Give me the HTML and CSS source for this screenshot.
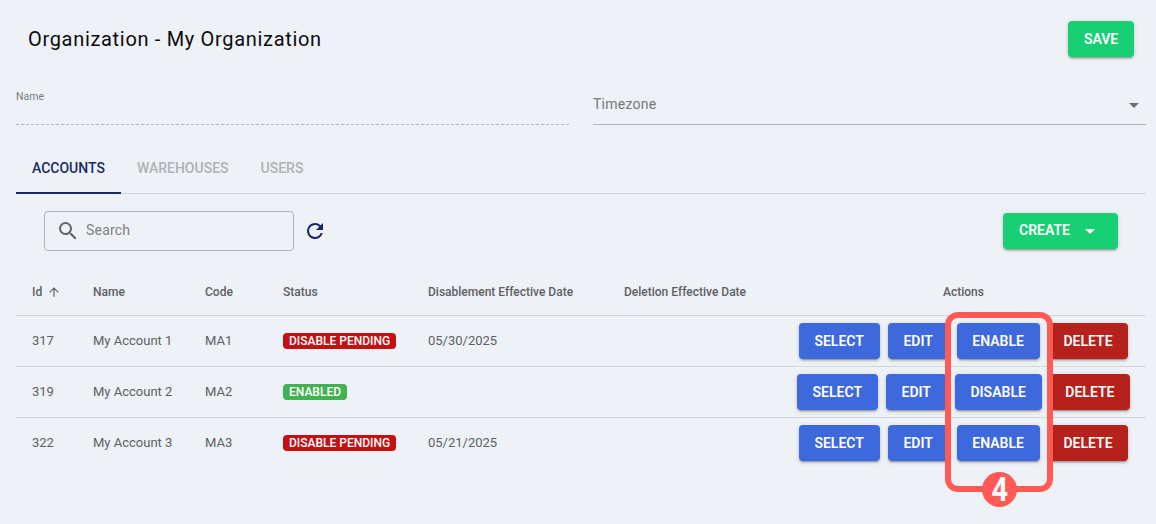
FILE: index.html
```html
<!DOCTYPE html>
<html lang="en">
<head>
<meta charset="utf-8">
<title>Organization - My Organization</title>
<link rel="stylesheet" href="styles.css">
</head>
<body>
<main class="page">
  <header class="header">
    <h1 class="title">Organization - My Organization</h1>
    <button class="btn btn-green">SAVE</button>
  </header>
  <section class="form-row">
    <div class="field field-name"><span class="field-label">Name</span></div>
    <div class="field field-zone">
      <span class="field-value">Timezone</span>
      <span class="select-arrow"></span>
    </div>
  </section>
  <nav class="tabs">
    <a class="tab tab-active">ACCOUNTS</a>
    <a class="tab">WAREHOUSES</a>
    <a class="tab">USERS</a>
  </nav>
  <section class="toolbar">
    <div class="search">
      <svg class="search-icon" viewBox="0 0 24 24" width="24" height="24"><path fill="#5f6368" d="M15.5 14h-.79l-.28-.27A6.47 6.47 0 0 0 16 9.5 6.5 6.5 0 1 0 9.5 16c1.61 0 3.09-.59 4.23-1.57l.27.28v.79l5 4.99L20.49 19l-4.99-5zm-6 0C7.01 14 5 11.99 5 9.5S7.01 5 9.5 5 14 7.01 14 9.5 11.99 14 9.5 14z"/></svg>
      <span class="search-text">Search</span>
    </div>
    <svg class="refresh" viewBox="0 0 24 24" width="24" height="24"><path fill="#152a66" d="M17.65 6.35A7.95 7.95 0 0 0 12 4a8 8 0 1 0 7.73 10h-2.08A6 6 0 1 1 12 6c1.66 0 3.14.69 4.22 1.78L13 11h7V4l-2.35 2.35z"/></svg>
    <button class="btn btn-green btn-create"><span class="create-label">CREATE</span><span class="create-arrow"></span></button>
  </section>
  <table class="grid">
    <colgroup>
      <col class="c-id"><col class="c-name"><col class="c-code"><col class="c-status"><col class="c-dis"><col class="c-del"><col class="c-act">
    </colgroup>
    <thead>
      <tr>
        <th>Id <svg class="sort" viewBox="0 0 24 24" width="14" height="14"><path fill="#5a5f66" d="M4 12l1.41 1.41L11 7.83V20h2V7.83l5.58 5.59L20 12l-8-8-8 8z"/></svg></th>
        <th>Name</th><th>Code</th><th>Status</th><th>Disablement Effective Date</th><th>Deletion Effective Date</th><th class="th-act">Actions</th>
      </tr>
    </thead>
    <tbody>
      <tr>
        <td>317</td><td>My Account 1</td><td>MA1</td><td><span class="chip chip-red">DISABLE PENDING</span></td><td>05/30/2025</td><td></td>
        <td><div class="actions"><button class="btn btn-blue">SELECT</button><button class="btn btn-blue">EDIT</button><button class="btn btn-blue">ENABLE</button><button class="btn btn-red">DELETE</button></div></td>
      </tr>
      <tr>
        <td>319</td><td>My Account 2</td><td>MA2</td><td><span class="chip chip-green">ENABLED</span></td><td></td><td></td>
        <td><div class="actions"><button class="btn btn-blue">SELECT</button><button class="btn btn-blue">EDIT</button><button class="btn btn-blue">DISABLE</button><button class="btn btn-red">DELETE</button></div></td>
      </tr>
      <tr>
        <td>322</td><td>My Account 3</td><td>MA3</td><td><span class="chip chip-red">DISABLE PENDING</span></td><td>05/21/2025</td><td></td>
        <td><div class="actions"><button class="btn btn-blue">SELECT</button><button class="btn btn-blue">EDIT</button><button class="btn btn-blue">ENABLE</button><button class="btn btn-red">DELETE</button></div></td>
      </tr>
    </tbody>
  </table>
</main>
<div class="callout"></div>
<div class="callout-badge"><span class="callout-digit">4</span></div>
</body>
</html>
```
FILE: styles.css
```css
* { box-sizing: border-box; }
html, body { margin: 0; height: 100%; }
body {
  background: #eef1f6;
  font-family: Roboto, "Liberation Sans", sans-serif;
  color: #000;
  overflow: hidden;
  position: relative;
}
.page { padding: 0 10px 0 16px; }

.header {
  display: flex;
  justify-content: space-between;
  align-items: center;
  padding: 21px 12px 0 12px;
}
.title { margin: 0; font-size: 20px; font-weight: 400; line-height: 36px; letter-spacing: 0.68px; color: #0b0b0f; }

.btn {
  border: 0;
  border-radius: 4px;
  height: 36px;
  padding: 0 15.75px;
  font-family: inherit;
  font-size: 14px;
  font-weight: 600;
  line-height: 34px;
  color: #fff;
  box-shadow: 0 3px 1px -2px rgba(0,0,0,.2), 0 2px 2px 0 rgba(0,0,0,.14), 0 1px 5px 0 rgba(0,0,0,.12);
}
.btn-green { background: #18cf73; }
.btn-blue { background: #3d69dc; }
.btn-red { background: #b7211b; }

.form-row {
  display: flex;
  gap: 24px;
  margin-top: 31px;
  height: 37px;
}
.field { flex: none; width: 553px; position: relative; }
.field-name { border-bottom: 1px dashed #b4b7bb; }
.field-zone { border-bottom: 1px solid #b0b3b7; display: flex; justify-content: space-between; align-items: center; padding: 0 7px 4px 0; }
.field-label { display: block; font-size: 10.5px; line-height: 12px; color: #7a7d82; margin-top: 3px; }
.field-value { font-size: 14px; letter-spacing: 0.25px; color: #75787d; }
.select-arrow { width: 0; height: 0; border-left: 5px solid transparent; border-right: 5px solid transparent; border-top: 5px solid #6a6d72; margin-top: 2px; }

.tabs {
  display: flex;
  margin-top: 20px;
  height: 49px;
  border-bottom: 1px solid #d3d6da;
}
.tab {
  padding: 0 16px;
  font-size: 14px;
  font-weight: 500;
  line-height: 46px;
  color: #aeb1b6;
}
.tab-active { color: #152a66; border-bottom: 2px solid #152a66; height: 49px; }

.toolbar {
  display: flex;
  align-items: center;
  padding: 17px 28px 0 28px;
}
.search {
  width: 250px;
  height: 40px;
  border: 1px solid #b0b3b7;
  border-radius: 4px;
  display: flex;
  align-items: center;
  padding-left: 11px;
}
.search-icon { flex: none; }
.search-text { margin-left: 6px; font-size: 14px; letter-spacing: 0.2px; color: #7c7f84; position: relative; top: -1px; }
.refresh { margin-left: 9px; }
.btn-create { margin-left: auto; display: flex; align-items: center; width: 115px; padding: 0 16px; }
.create-label { position: relative; top: -1px; }
.create-arrow { margin-left: 15px; width: 0; height: 0; border-left: 5px solid transparent; border-right: 5px solid transparent; border-top: 5px solid #fff; margin-top: 1px; }

.grid {
  width: 1130px;
  table-layout: fixed;
  border-collapse: collapse;
  margin-top: 18px;
  font-size: 13px;
}
.c-id { width: 61px; }
.c-name { width: 112px; }
.c-code { width: 78px; }
.c-status { width: 145px; }
.c-dis { width: 196px; }
.c-del { width: 173px; }
.c-act { width: 365px; }
.grid th {
  height: 46px;
  padding: 0 0 0 16px;
  text-align: left;
  font-size: 12px;
  font-weight: 500;
  color: #5d6065;
  white-space: nowrap;
}
.grid th.th-act { text-align: center; padding: 0 16px; }
.sort { vertical-align: -3px; margin-left: 2px; }
.grid td {
  height: 51px;
  padding: 0 0 0 16px;
  color: #5d6065;
  border-top: 1px solid #d3d6da;
  white-space: nowrap;
}
.grid td:last-child { padding: 0 16px; }
.actions { display: flex; justify-content: center; gap: 8px; }

.chip {
  display: inline-block;
  vertical-align: middle;
  height: 16px;
  line-height: 16px;
  padding: 0 6px;
  border-radius: 4px;
  font-size: 12px;
  font-weight: 500;
  color: #fff;
}
.chip-red { background: #c21013; }
.chip-green { background: #42b151; }

.callout {
  position: absolute;
  left: 945px;
  top: 312px;
  width: 108px;
  height: 180px;
  border: 6px solid #ff5a55;
  border-radius: 13px;
}
.callout-badge {
  position: absolute;
  left: 982px;
  top: 472px;
  width: 35px;
  height: 35px;
  border-radius: 50%;
  background: #ff5a55;
  color: #fff;
  font-size: 34px;
  font-weight: 700;
  line-height: 35px;
  text-align: center;
}
.callout-digit { display: inline-block; transform: scaleX(0.85); }
```
